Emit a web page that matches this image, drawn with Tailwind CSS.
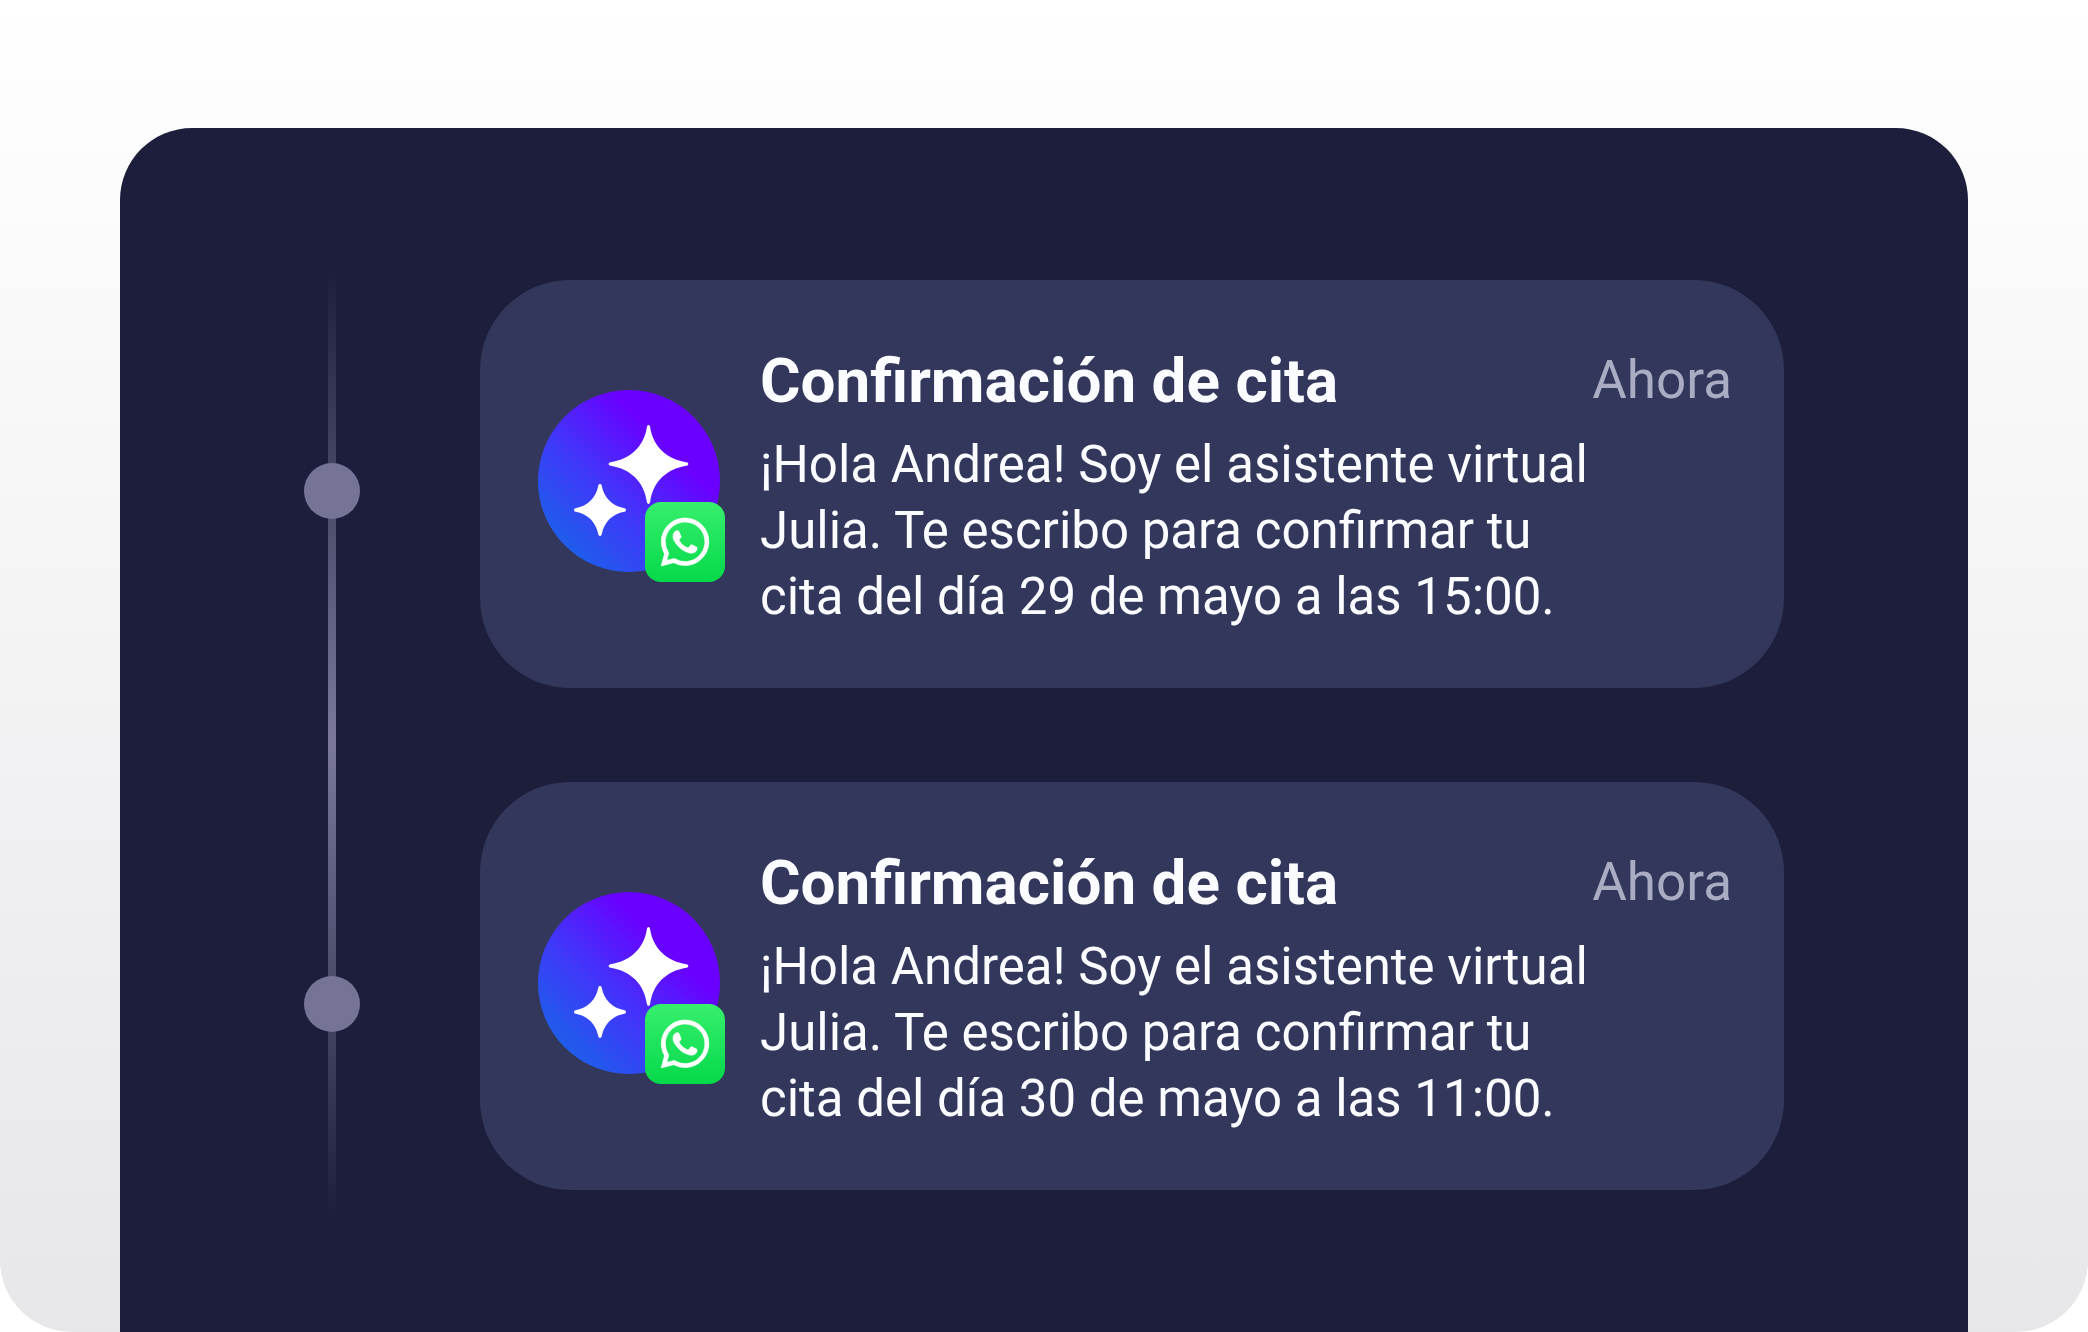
<!DOCTYPE html>
<html lang="es">
  <head>
    <meta charset="UTF-8" />
    <meta name="viewport" content="width=device-width, initial-scale=1.0" />
    <title>Confirmación de cita</title>
    <script src="https://cdn.jsdelivr.net/npm/@tailwindcss/browser@4"></script>
  </head>
  <body class="bg-white font-['Roboto',sans-serif]">
    <!-- shared icons -->
    <svg class="absolute w-0 h-0" aria-hidden="true">
      <defs>
        <linearGradient id="avatarFill" x1="0.1" y1="0.85" x2="0.68" y2="0.27">
          <stop offset="0" stop-color="#1c60ea" />
          <stop offset="0.5" stop-color="#4136fa" />
          <stop offset="1" stop-color="#6a00ff" />
        </linearGradient>
        <linearGradient id="badgeFill" x1="0" y1="0" x2="0" y2="1">
          <stop offset="0" stop-color="#37ef6c" />
          <stop offset="1" stop-color="#05d94a" />
        </linearGradient>
        <symbol id="avatar" viewBox="0 0 182 182">
          <circle cx="91" cy="91" r="91" fill="url(#avatarFill)" />
          <path
            fill="#fff"
            d="M110.500 35C111.500 35 112 36 112.200 37.500C115 56 128 69 148.500 72.300C151 72.700 151 75.300 148.500 75.700C128 79 115 92 112.200 111.500C111.800 114.800 109.200 114.800 108.800 111.500C106 92 93 79 72.500 75.700C70 75.300 70 72.700 72.500 72.300C93 69 106 56 108.800 37.500C109 36 109.500 35 110.500 35Z"
          />
          <path
            fill="#fff"
            d="M62 94C63 94 63.600 94.600 63.800 96C66 107.500 74 116 86.500 118.200C88.500 118.600 88.500 121.400 86.500 121.800C74 124 66 132.500 63.800 144C63.400 146.500 60.600 146.500 60.200 144C58 132.500 50 124 37.500 121.800C35.500 121.400 35.500 118.600 37.500 118.200C50 116 58 107.500 60.200 96C60.400 94.600 61 94 62 94Z"
          />
        </symbol>
        <symbol id="whatsapp" viewBox="0 0 80 80">
          <rect width="80" height="80" rx="16" fill="url(#badgeFill)" />
          <g transform="translate(16 16) scale(2)">
            <path
              fill="#fff"
              stroke="#fff"
              stroke-width="0.3"
              d="M17.472 14.382c-.297-.149-1.758-.867-2.030-.967-.273-.099-.471-.148-.670.150-.197.297-.767.966-.940 1.164-.173.199-.347.223-.644.075-.297-.150-1.255-.463-2.390-1.475-.883-.788-1.480-1.761-1.653-2.059-.173-.297-.018-.458.130-.606.134-.133.298-.347.446-.520.149-.174.198-.298.298-.497.099-.198.050-.371-.025-.520-.075-.149-.669-1.612-.916-2.207-.242-.579-.487-.500-.669-.510-.173-.008-.371-.010-.570-.010-.198 0-.520.074-.792.372-.272.297-1.040 1.016-1.040 2.479 0 1.462 1.065 2.875 1.213 3.074.149.198 2.096 3.200 5.077 4.487.709.306 1.262.489 1.694.625.712.227 1.360.195 1.871.118.571-.085 1.758-.719 2.006-1.413.248-.694.248-1.289.173-1.413-.074-.124-.272-.198-.570-.347m-5.421 7.403h-.004a9.870 9.870 0 01-5.031-1.378l-.361-.214-3.741.982.998-3.648-.235-.374a9.860 9.860 0 01-1.510-5.260c.001-5.450 4.436-9.884 9.888-9.884 2.640 0 5.122 1.030 6.988 2.898a9.825 9.825 0 012.893 6.994c-.003 5.450-4.437 9.884-9.885 9.884m8.413-18.297A11.815 11.815 0 0012.050 0C5.495 0 .160 5.335.157 11.892c0 2.096.547 4.142 1.588 5.945L.057 24l6.305-1.654a11.882 11.882 0 005.683 1.448h.005c6.554 0 11.890-5.335 11.893-11.893a11.821 11.821 0 00-3.480-8.413z"
            />
          </g>
        </symbol>
      </defs>
    </svg>

    <main class="min-h-screen flex flex-col px-30 pt-32 rounded-b-[72px] bg-linear-to-b from-white to-[#e7e7ea]">
      <section class="flex-1 flex items-start rounded-t-[72px] bg-[#1d1e3c] pt-[140px] px-46 pb-20">
        <!-- timeline -->
        <div class="relative self-start w-14 shrink-0 flex flex-col items-center gap-[457px] pt-[195px] pb-46">
          <div class="absolute inset-y-0 left-6 w-2 bg-linear-to-b from-transparent via-[#7a799a] to-transparent"></div>
          <span class="relative size-14 rounded-full bg-[#757497]"></span>
          <span class="relative size-14 rounded-full bg-[#757497]"></span>
        </div>

        <div class="flex-1 flex flex-col gap-[94px] ml-30 pt-3">
          <article class="flex items-start gap-10 rounded-[90px] bg-[#33375b] pt-[66px] pb-[58px] pl-[58px] pr-[52px]">
            <div class="relative shrink-0 mt-11">
              <svg class="size-[182px]" aria-hidden="true"><use href="#avatar" /></svg>
              <svg class="absolute left-[107px] top-28 size-20" role="img" aria-label="WhatsApp"><use href="#whatsapp" /></svg>
            </div>
            <div class="flex-1 text-[#fafcff]">
              <div class="flex justify-between">
                <h2 class="text-[62px] leading-[70px] font-bold">Confirmación de cita</h2>
                <time class="text-[53px] leading-[68px] text-[#a9acc2]">Ahora</time>
              </div>
              <p class="mt-4 text-[51px] leading-[66px]">
                ¡Hola Andrea! Soy el asistente virtual<br />
                Julia. Te escribo para confirmar tu<br />
                cita del día 29 de mayo a las 15:00.
              </p>
            </div>
          </article>

          <article class="flex items-start gap-10 rounded-[90px] bg-[#33375b] pt-[66px] pb-[58px] pl-[58px] pr-[52px]">
            <div class="relative shrink-0 mt-11">
              <svg class="size-[182px]" aria-hidden="true"><use href="#avatar" /></svg>
              <svg class="absolute left-[107px] top-28 size-20" role="img" aria-label="WhatsApp"><use href="#whatsapp" /></svg>
            </div>
            <div class="flex-1 text-[#fafcff]">
              <div class="flex justify-between">
                <h2 class="text-[62px] leading-[70px] font-bold">Confirmación de cita</h2>
                <time class="text-[53px] leading-[68px] text-[#a9acc2]">Ahora</time>
              </div>
              <p class="mt-4 text-[51px] leading-[66px]">
                ¡Hola Andrea! Soy el asistente virtual<br />
                Julia. Te escribo para confirmar tu<br />
                cita del día 30 de mayo a las 11:00.
              </p>
            </div>
          </article>
        </div>
      </section>
    </main>
  </body>
</html>
